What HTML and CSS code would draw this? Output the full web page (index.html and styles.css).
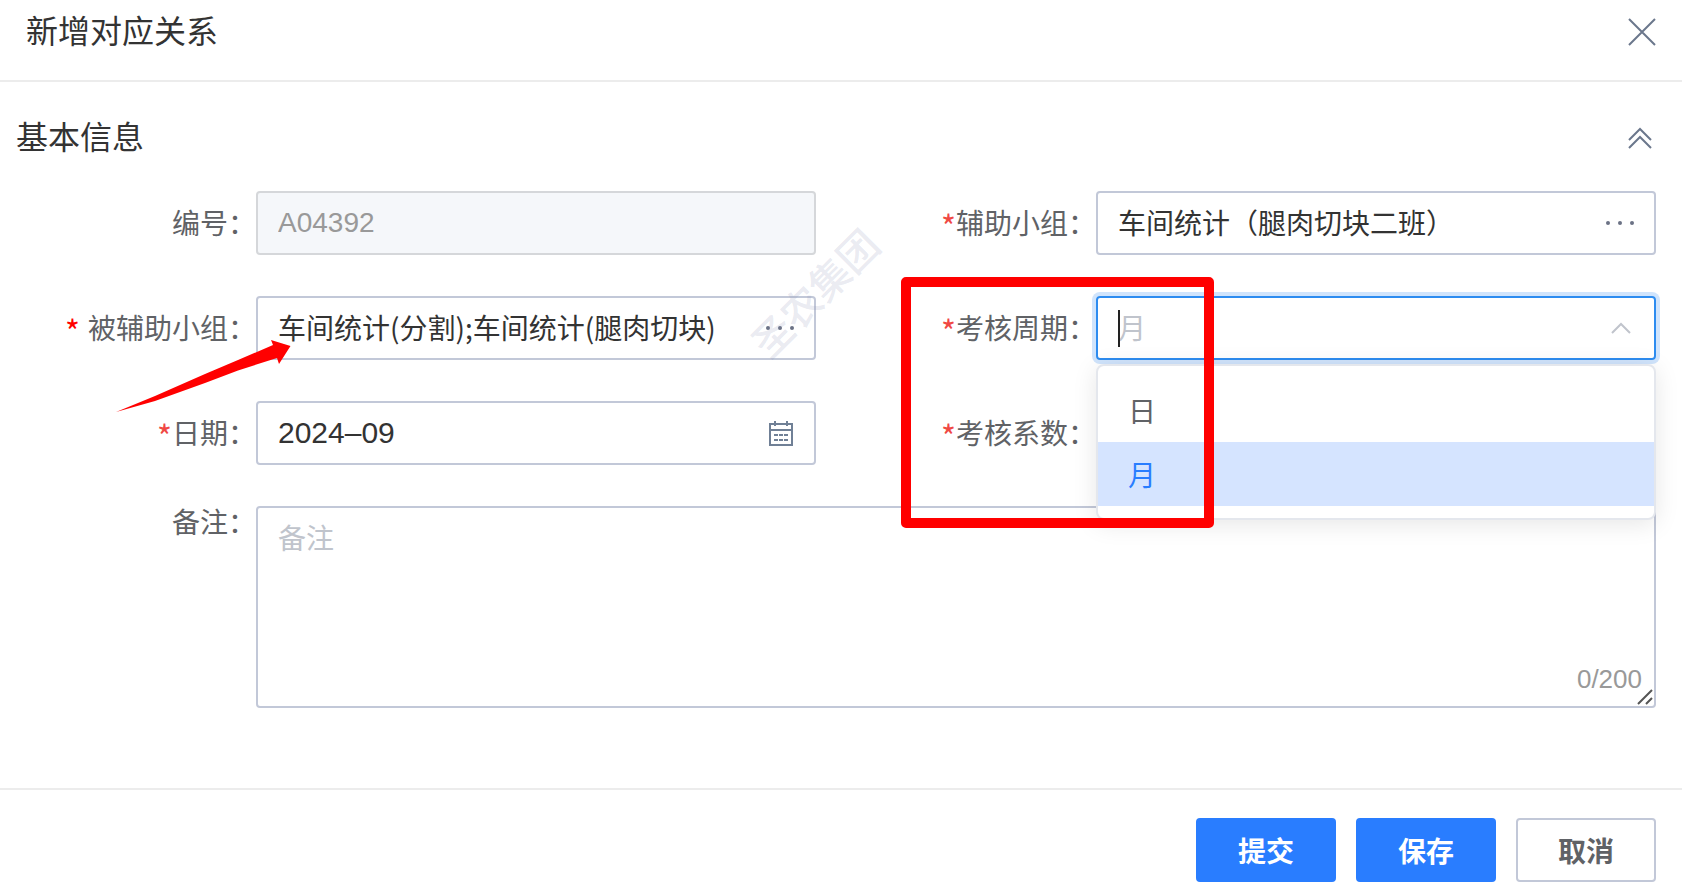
FILE: index.html
```
<!DOCTYPE html>
<html lang="zh-CN">
<head>
    <meta charset="UTF-8">
    <meta name="viewport" content="width=device-width, initial-scale=1.0">
    <title>新增对应关系</title>
    <link rel="stylesheet" href="styles.css">
</head>
<body>

    <!-- Dialog header -->
    <header class="dialog-header">
        <h1>新增对应关系</h1>
        <button type="button" class="icon-button" aria-label="关闭">
            <svg width="28" height="28" viewBox="0 0 28 28"><path d="M1 1l26 26M27 1L1 27"/></svg>
        </button>
    </header>

    <form class="dialog-form">
        <main class="dialog-body">
            <div class="section-title">
                <h2>基本信息</h2>
                <button type="button" class="icon-button" aria-label="收起">
                    <svg width="24" height="22" viewBox="0 0 24 22"><path d="M1 13L12 2l11 11M1 21l11-11 11 11"/></svg>
                </button>
            </div>

            <div class="form-grid">
                <div class="form-item">
                    <label for="code">编号：</label>
                    <div class="field disabled">
                        <input type="text" id="code" class="latin" value="A04392" disabled>
                    </div>
                </div>

                <div class="form-item">
                    <label for="helper"><span class="star">*</span>辅助小组：</label>
                    <div class="field">
                        <input type="text" id="helper" value="车间统计（腿肉切块二班）">
                        <button type="button" class="icon-button dots" aria-label="选择辅助小组">
                            <svg width="28" height="6" viewBox="0 0 28 6"><circle cx="2" cy="3" r="2"/><circle cx="14" cy="3" r="2"/><circle cx="26" cy="3" r="2"/></svg>
                        </button>
                    </div>
                </div>

                <div class="form-item">
                    <label for="helped"><span class="star strong">*</span>被辅助小组：</label>
                    <div class="field">
                        <input type="text" id="helped" value="车间统计(分割);车间统计(腿肉切块)">
                        <button type="button" class="icon-button dots" aria-label="选择被辅助小组">
                            <svg width="28" height="6" viewBox="0 0 28 6"><circle cx="2" cy="3" r="2"/><circle cx="14" cy="3" r="2"/><circle cx="26" cy="3" r="2"/></svg>
                        </button>
                    </div>
                    <div class="watermark">圣农集团</div>
                    <!-- Arrow pointing at the field -->
                    <svg class="arrow" width="175" height="73" viewBox="0 0 175 73">
                        <path d="M0 72L39 56L89 34L122 20L157 5L155 0L174.500 6L163 24L161 18L122 30.500L89 43L39 61Z"/>
                    </svg>
                </div>

                <div class="form-item">
                    <label for="period"><span class="star">*</span>考核周期：</label>
                    <div class="field focused">
                        <select id="period">
                            <option>日</option>
                            <option selected>月</option>
                        </select>
                        <span class="caret"></span>
                        <svg class="chevron" width="20" height="12" viewBox="0 0 20 12"><path d="M1 11l9-9 9 9"/></svg>
                        <ul class="dropdown" role="listbox">
                            <li role="option">日</li>
                            <li role="option" class="selected" aria-selected="true">月</li>
                        </ul>
                    </div>
                    <div class="highlight-box"></div>
                </div>

                <div class="form-item">
                    <label for="month"><span class="star">*</span>日期：</label>
                    <div class="field">
                        <input type="text" id="month" class="latin date" value="2024–09">
                        <button type="button" class="icon-button calendar" aria-label="选择日期">
                            <svg width="26" height="26" viewBox="0 0 26 26">
                                <path d="M2 4h22v21H2zM2 10h22M7 1v5M19 1v5"/>
                                <path d="M6 15h14M6 20h14" stroke-dasharray="4 1"/>
                            </svg>
                        </button>
                    </div>
                </div>

                <div class="form-item">
                    <label for="ratio"><span class="star">*</span>考核系数：</label>
                    <div class="field">
                        <input type="text" id="ratio">
                    </div>
                </div>

                <div class="form-item wide">
                    <label for="remark">备注：</label>
                    <div class="field area">
                        <textarea id="remark" placeholder="备注" maxlength="200"></textarea>
                        <span class="count">0/200</span>
                        <svg class="resizer" width="16" height="16" viewBox="0 0 16 16"><path d="M1 15L15 1M9 15l6-6"/></svg>
                    </div>
                </div>
            </div>
        </main>

        <!-- Action buttons -->
        <footer class="dialog-footer">
            <button type="submit" class="btn primary">提交</button>
            <button type="button" class="btn primary">保存</button>
            <button type="button" class="btn">取消</button>
        </footer>
    </form>

</body>
</html>
```
FILE: styles.css
```
* {
    margin: 0;
    padding: 0;
    box-sizing: border-box;
}

body {
    min-height: 100vh;
    display: flex;
    flex-direction: column;
    background-color: #fff;
    color: #333;
    font-family: "Noto Sans CJK SC", sans-serif;
    font-size: 28px;
    line-height: 40px;
}

input,
select,
textarea,
button {
    font: inherit;
    color: inherit;
    border: none;
    outline: none;
    background: none;
}

h1,
h2 {
    padding-bottom: 6px;
    font-size: 32px;
    font-weight: 400;
    line-height: 42px;
}

/* Header */
.dialog-header {
    display: flex;
    justify-content: space-between;
    align-items: center;
    padding: 8px 26px 24px;
    border-bottom: 2px solid #ececec;
}

.icon-button {
    display: flex;
    align-items: center;
    cursor: pointer;
}

.icon-button svg {
    fill: none;
    stroke: #6b778c;
    stroke-width: 2;
}

/* Form */
.dialog-form {
    flex: 1;
    display: flex;
    flex-direction: column;
}

.dialog-body {
    flex: 1;
    padding: 32px 26px 40px 16px;
}

.section-title {
    display: flex;
    justify-content: space-between;
    align-items: center;
    margin-bottom: 29px;
    padding-right: 4px;
}

.form-grid {
    display: grid;
    grid-template-columns: 1fr 1fr;
    gap: 41px 40px;
}

.form-item {
    position: relative;
    display: flex;
}

.form-item.wide {
    grid-column: 1 / -1;
}

.form-item label {
    flex: 0 0 240px;
    text-align: right;
    line-height: 62px;
    color: #606266;
    white-space: nowrap;
}

.form-item.wide label {
    line-height: 30px;
}

.star {
    color: #f04844;
    font-size: 32px;
    line-height: 1;
    vertical-align: -5px;
}

.star.strong {
    color: #f00;
    margin-right: 8px;
}

.field {
    position: relative;
    flex: 1;
    min-width: 0;
    height: 64px;
    display: flex;
    align-items: center;
    border: 2px solid #c2c8d8;
    border-radius: 4px;
    padding: 0 20px;
}

.field input,
.field select {
    flex: 1;
    min-width: 0;
    height: 60px;
    padding-bottom: 2px;
}

.field .latin {
    padding-bottom: 0;
    font-family: "Liberation Sans", sans-serif;
}

.field .date {
    font-size: 30px;
}

.field.disabled {
    background-color: #f5f7fa;
    border-color: #d5d7da;
    color: #999;
}

.dots svg {
    fill: #6b7285;
    stroke: none;
}

.calendar svg {
    stroke: #708096;
}

/* Open select */
.field.focused {
    border-color: #2d8cf0;
    box-shadow: 0 0 0 4px #d0e4fc;
    padding-right: 23px;
}

.field select {
    appearance: none;
    color: #c0c4cc;
}

.caret {
    position: absolute;
    left: 20px;
    top: 12px;
    width: 2px;
    height: 37px;
    background-color: #222;
}

.chevron {
    fill: none;
    stroke: #c0c4cc;
    stroke-width: 2;
}

.dropdown {
    position: absolute;
    z-index: 5;
    top: 66px;
    left: -2px;
    right: -2px;
    padding: 12px 0;
    list-style: none;
    background-color: #fff;
    border: 2px solid #e4e7ed;
    border-radius: 8px;
    box-shadow: 0 4px 24px rgba(0, 0, 0, 0.1);
}

.dropdown li {
    padding: 0 30px;
    line-height: 64px;
    color: #606266;
}

.dropdown .selected {
    background-color: #d5e4ff;
    color: #297dff;
}

/* Remark */
.field.area {
    height: 202px;
    padding: 0;
}

.field textarea {
    width: 100%;
    height: 100%;
    padding: 9px 20px;
    resize: none;
}

.field textarea::placeholder {
    color: #c0c4cc;
}

.count {
    position: absolute;
    right: 12px;
    bottom: 9px;
    line-height: 36px;
    font-family: "Liberation Sans", sans-serif;
    font-size: 26px;
    color: #999;
}

.resizer {
    position: absolute;
    right: 1px;
    bottom: 1px;
    fill: none;
    stroke: #555;
    stroke-width: 2;
}

/* Marks drawn over the form */
.watermark {
    position: absolute;
    right: -78px;
    top: -24px;
    width: 160px;
    font-size: 40px;
    font-weight: 500;
    color: rgba(130, 138, 175, 0.18);
    transform: rotate(-45deg);
    pointer-events: none;
}

.arrow {
    position: absolute;
    left: 100px;
    top: 44px;
    fill: #f00;
    pointer-events: none;
}

.highlight-box {
    position: absolute;
    z-index: 6;
    left: 45px;
    top: -19px;
    width: 313px;
    height: 251px;
    border: 10px solid #f00;
    border-radius: 5px;
    pointer-events: none;
}

/* Footer */
.dialog-footer {
    display: flex;
    justify-content: flex-end;
    gap: 20px;
    padding: 28px 26px 12px;
    border-top: 2px solid #ececec;
}

.btn {
    width: 140px;
    height: 64px;
    border: 2px solid #c2c8d8;
    border-radius: 4px;
    color: #606266;
    font-weight: 700;
    cursor: pointer;
}

.btn.primary {
    background-color: #297dff;
    border-color: #297dff;
    color: #fff;
}
```
